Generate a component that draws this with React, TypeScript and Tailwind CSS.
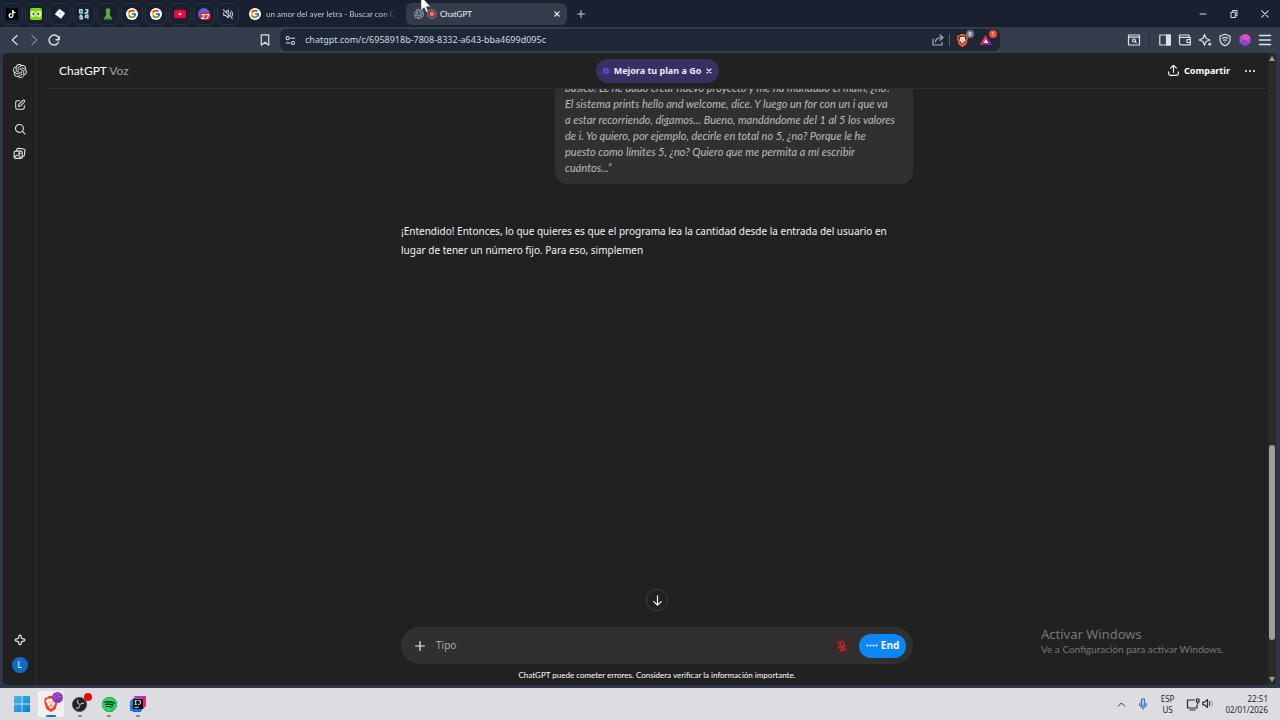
import type { ReactNode } from "react";
import { FcGoogle } from "react-icons/fc";
import { SiOpenai, SiBrave, SiSpotify, SiTiktok, SiYoutube } from "react-icons/si";

const GoogleBadge = () => (
  <span className="flex size-3 shrink-0 items-center justify-center rounded-full bg-white">
    <FcGoogle size={10} />
  </span>
);

const stroke = {
  fill: "none",
  stroke: "currentColor",
  strokeLinecap: "round" as const,
  strokeLinejoin: "round" as const,
};

function Icon({ size = 14, width = 1.2, children }: { size?: number; width?: number; children: ReactNode }) {
  return (
    <svg width={size} height={size} viewBox="0 0 14 14" strokeWidth={width} {...stroke} aria-hidden="true" className="shrink-0">
      {children}
    </svg>
  );
}

const pinned: { name: string; icon: ReactNode }[] = [
  {
    name: "TikTok",
    icon: (
      <span className="flex size-3 items-center justify-center rounded-xs bg-black text-white">
        <SiTiktok size={8} />
      </span>
    ),
  },
  {
    name: "Duolingo",
    icon: (
      <svg width="12" height="12" viewBox="0 0 12 12">
        <rect width="12" height="12" rx="2" fill="#7bdc0a" />
        <rect x=".8" y="3" width="4.8" height="6" rx="2.2" fill="#efffd8" />
        <rect x="6.4" y="3" width="4.8" height="6" rx="2.2" fill="#efffd8" />
        <rect x="2.6" y="4.4" width="1.7" height="2.8" rx=".8" fill="#365b12" />
        <rect x="7.4" y="4.4" width="1.7" height="2.8" rx=".8" fill="#365b12" />
      </svg>
    ),
  },
  {
    name: "Git",
    icon: (
      <svg width="12" height="12" viewBox="0 0 12 12">
        <path d="M5.4 2 10 5.200 6.800 9.600 2 6z" fill="#f5f7fa" stroke="#f5f7fa" strokeWidth="1.800" strokeLinejoin="round" />
        <path d="M5 4.600 7 6.400" stroke="#7b8492" strokeWidth=".7" />
      </svg>
    ),
  },
  {
    name: "Código",
    icon: (
      <svg width="12" height="12" viewBox="0 0 12 12" fill="none" stroke="#a5dde3" strokeWidth="1.4">
        <path d="M1.7 1.7h2.4v3.1H1.7zM7.2 1.7h2.5v1.6L7.5 5h2.8M1.7 7.2h2.6M4 7.2 2 8.9h2.3v1.8H1.6M7.4 7.2h2.5v3.6M7.4 7.2v2h2.5" />
      </svg>
    ),
  },
  {
    name: "Ajedrez",
    icon: (
      <svg width="12" height="12" viewBox="0 0 12 12">
        <path d="M6 .3a2.200 2.200 0 0 1 1.500 3.900l1 .8-.9.700q.2 2.300 2 3.700.6.700.6 2.100H1.800q0-1.400.6-2.100 1.800-1.400 2-3.700L3.500 5l1-.8A2.200 2.200 0 0 1 6 .3z" fill="#68a746" />
        <path d="M2 10.300h8v1.200H2z" fill="#3d6f35" />
      </svg>
    ),
  },
  { name: "Google", icon: <GoogleBadge /> },
  { name: "Google 2", icon: <GoogleBadge /> },
  { name: "YouTube", icon: <SiYoutube size={12} className="bg-[radial-gradient(white_22%,transparent_23%)] text-[#f20440]" /> },
  {
    name: "Discord",
    icon: (
      <svg width="13" height="12" viewBox="0 0 13 12">
        <circle cx="6" cy="6" r="6" fill="#5662dc" />
        <rect x="2" y="4" width="10.5" height="8" rx="3.5" fill="#df2638" />
        <text x="7.2" y="10.7" fontSize="7.5" fontWeight="700" fontFamily="Open Sans, sans-serif" fill="white" textAnchor="middle">27</text>
      </svg>
    ),
  },
  {
    name: "Silenciado",
    icon: (
      <Icon size={12} width={1.2}>
        <path d="M2 5.2v3.4h2l3.4 2.8V7.6M5.2 4.1l2.2-1.8v3.3M1.5 2 12 12.2M9.4 5.2q1.2 1.4.4 3M10.8 3.5q2.6 3 .8 6.2" />
      </Icon>
    ),
  },
];

function IconButton({ label, className = "", children }: { label: string; className?: string; children: ReactNode }) {
  return (
    <button type="button" aria-label={label} className={`flex shrink-0 items-center justify-center ${className}`}>
      {children}
    </button>
  );
}

function TabStrip() {
  return (
    <div className="relative flex h-[27px] shrink-0 items-center bg-[#192131] pl-px font-[Lato,sans-serif] text-[#c6ced9]">
      <nav aria-label="Pestañas fijadas" className="flex gap-0.5">
        {pinned.map((tab) => (
          <IconButton key={tab.name} label={tab.name} className="size-[22px] rounded-md border border-[#293241]">
            {tab.icon}
          </IconButton>
        ))}
      </nav>
      <button type="button" className="ml-2.5 flex w-[149px] items-center gap-[5px] text-[8px] text-[#c3cad5]">
        <GoogleBadge />
        <span className="text-left whitespace-nowrap [mask-image:linear-gradient(to_right,black_90%,transparent)]">
          un amor del ayer letra - Buscar con G
        </span>
      </button>
      <div className="ml-2 flex h-[22px] w-[161px] items-center rounded-md bg-[#343c4b] pr-1 pl-2 text-[8px] text-[#f1f4f8]">
        <SiOpenai size={10} className="text-[#aeb5bf]" />
        <svg width="10" height="10" viewBox="0 0 10 10" className="ml-[3px]" aria-hidden="true">
          <circle cx="5" cy="5" r="4.2" fill="none" stroke="#e36a6b" strokeWidth="1" />
          <circle cx="5" cy="5" r="2.4" fill="#ed7373" />
        </svg>
        <span className="ml-[3px] flex-1">ChatGPT</span>
        <IconButton label="Cerrar pestaña" className="size-3">
          <Icon size={10} width={1.8}><path d="m4 4 6 6M10 4l-6 6" /></Icon>
        </IconButton>
      </div>
      <IconButton label="Nueva pestaña" className="ml-[7px] size-3.5">
        <Icon size={12}><path d="M7 3v8M3 7h8" /></Icon>
      </IconButton>
      <div className="ml-auto flex text-[#d5dae2]">
        <IconButton label="Minimizar" className="w-[31px]"><Icon size={12}><path d="M3.5 7h7" /></Icon></IconButton>
        <IconButton label="Restaurar" className="w-[31px]">
          <Icon size={12}><path d="M3.5 5h5v6h-5zM5.5 5V3h5v6h-2" /></Icon>
        </IconButton>
        <IconButton label="Cerrar" className="w-[31px]"><Icon size={12}><path d="m3.3 3.3 7.4 7.4M10.7 3.3l-7.4 7.4" /></Icon></IconButton>
      </div>
      <svg width="12" height="18" viewBox="0 0 12 18" className="absolute -top-1 left-[420px]" aria-hidden="true">
        <path d="M1 0v14.5l3.2-3 2.1 4.7 2-.9-2.1-4.5h4.2z" fill="white" stroke="#303642" strokeWidth=".5" />
      </svg>
    </div>
  );
}

function Toolbar() {
  return (
    <div className="flex h-[26px] shrink-0 items-center gap-2 bg-[#343d4c] px-2 text-[#dbe1e8]">
      <div className="flex flex-1 items-center">
        <IconButton label="Atrás" className="w-3.5"><Icon><path d="M9 2.5 4.2 7 9 11.5" /></Icon></IconButton>
        <IconButton label="Adelante" className="ml-[5px] w-3.5 text-[#7b8492]"><Icon><path d="M5 2.5 9.8 7 5 11.5" /></Icon></IconButton>
        <IconButton label="Recargar" className="ml-1.5 w-3.5">
          <Icon width={1.4}><path d="M11.5 9.3A5 5 0 1 1 12 6.5M12.2 3.5v3.2H9" /></Icon>
        </IconButton>
        <IconButton label="Añadir marcador" className="ml-auto w-3.5">
          <Icon><path d="M3.3 1.8h7.4v10.4L7 9.2l-3.7 3z" /></Icon>
        </IconButton>
      </div>
      <div className="flex h-[22px] w-[720px] shrink items-center rounded-md bg-[#1e2736] px-1">
        <Icon size={13} width={1.1}><circle cx="4" cy="4.5" r="1.7" /><path d="M7 4.5h4.5M2.5 9.7h4" /><circle cx="9.7" cy="9.7" r="1.7" /></Icon>
        <input aria-label="Dirección" readOnly defaultValue="chatgpt.com/c/6958918b-7808-8332-a643-bba4699d095c" className="ml-2 min-w-0 flex-1 bg-transparent text-[9px] text-[#d0d7e0] outline-none" />
        <IconButton label="Compartir página" className="w-3.5 text-[#a5afbd]">
          <Icon><path d="M2 6v6h9V9.5M4.5 9C4.5 6 6.5 4.5 11.5 4.5M9 2l3 2.5-3 2.7" /></Icon>
        </IconButton>
        <span className="mx-1 h-3 w-px bg-[#566170]" />
        <span className="relative ml-0.5 flex size-4 items-center">
          <SiBrave size={13} className="text-[#f65a2c]" />
          <svg width="13" height="13" viewBox="0 0 13 13" className="absolute left-0" aria-hidden="true"><path d="M3.500 3.500 6.500 2.800l3 .7-.6 1.200.6 1.200L8.700 7 6.500 9.500 4.300 7l-.8-1.100.6-1.200z" fill="#f5ebe8" /><path d="m4.800 4.800 1.200.6M8.200 4.800 7 5.400M6.500 6v1.500" stroke="#f65a2c" strokeWidth=".7" /></svg>
          <span className="absolute -top-0.5 -right-0.5 flex size-2 items-center justify-center rounded-full bg-[#6d7485] text-[6px] text-white">8</span>
        </span>
        <span className="relative ml-2 flex size-4 items-center">
          <svg width="12" height="12" viewBox="0 0 12 12" aria-hidden="true"><path d="M6 1 0 11h6z" fill="#ff4734" /><path d="M6 1 12 11H0l3-2z" fill="#8e219d" /><path d="m6 1-6 10 3-2 3-4z" fill="#f24338" /><path d="m6 5 2.2 4H3.8z" fill="white" /></svg>
          <span className="absolute -top-0.5 -right-px flex size-2 items-center justify-center rounded-full bg-[#f3472f] text-[6px] text-white">1</span>
        </span>
      </div>
      <div className="flex flex-1 items-center justify-end gap-1.5">
        <IconButton label="Buscar pestañas" className="w-3.5">
          <Icon><path d="M1.5 2h11v10h-11zM1.5 4.2h11" /><circle cx="7" cy="7.5" r="1.5" /><path d="m8.2 8.7 1 1" /></Icon>
        </IconButton>
        <span className="mx-0.5 h-3 w-px bg-[#1d2634]" />
        <IconButton label="Barra lateral" className="w-3.5"><Icon><path d="M1.8 2h10.4v10H1.8z" /><path d="M8.5 2h3.7v10H8.5z" fill="currentColor" /></Icon></IconButton>
        <IconButton label="Cartera" className="w-3.5"><Icon><path d="M11 4.3V2H1.5v8.2q0 1.6 1.6 1.6h9.2V4.3H2.5M12.3 6.5H9v3h3.3" /></Icon></IconButton>
        <IconButton label="Leo" className="w-3.5"><Icon><path d="M6.5 1.5 8 5.3 11.8 7 8 8.5 6.5 12.3 5 8.5 1.2 7 5 5.3zM11.7 10v2.5M10.5 11.2H13" /></Icon></IconButton>
        <IconButton label="VPN" className="w-3.5"><Icon><path d="M7 1.2 12 3v4.5q-1 3.7-5 5.3-4-1.6-5-5.3V3zM4.3 5.2q2.7-1.5 5.4 0M5.4 7.2q1.6-.8 3.2 0M7 9.2v.1" /></Icon></IconButton>
        <IconButton label="Perfil" className="w-3.5">
          <svg width="12" height="12" viewBox="0 0 12 12" aria-hidden="true"><circle cx="6" cy="6" r="5.7" fill="#9143d0" /><path d="M.4 5Q2 .3 6.500.3q3.800.2 5 4Q6 2.500.4 5" fill="#f04fb5" /><path d="M.8 7.500q3.500-4 10.500-2.500M5 3.500l6 5" stroke="#ee62b9" fill="none" /></svg>
        </IconButton>
        <IconButton label="Menú" className="w-3.5"><Icon width={1.5}><path d="M1.5 2.5h11M1.5 7h11M1.5 11.5h11" /></Icon></IconButton>
      </div>
    </div>
  );
}

function Sidebar() {
  return (
    <aside className="flex w-[34px] shrink-0 flex-col items-center border-r border-[#2c2c2c] pt-2.5 pb-3 text-[#e8e8e8]">
      <IconButton label="ChatGPT" className="size-4"><SiOpenai size={14} /></IconButton>
      <IconButton label="Nuevo chat" className="mt-[18px] size-4">
        <Icon size={12}><path d="M6.5 2H4Q2 2 2 4v6q0 2 2 2h6q2 0 2-2V7.5M5.2 8.8l.5-2.6L10.5 1.4q1.3-.5 2 .8 0 .6-.3 1L7.8 8z" /></Icon>
      </IconButton>
      <IconButton label="Buscar" className="mt-2 size-4"><Icon size={12} width={1.3}><circle cx="6.3" cy="6.3" r="4.6" /><path d="m9.7 9.7 3 3" /></Icon></IconButton>
      <IconButton label="Imágenes" className="mt-2 size-4">
        <Icon size={13}><path d="M4 4V3q.2-1.7 2-1.5l5.5.6q1.5.2 1.3 1.8l-.6 5q-.3 1.5-1.7 1.3M2.8 4.5h5.5q1.6 0 1.6 1.6v4.6q0 1.6-1.6 1.6H2.8q-1.6 0-1.6-1.6V6.100q0-1.600 1.600-1.600M1.500 11l2.300-2q1-.7 2 0l3.200 3" /><circle cx="6.9" cy="7" r=".7" /></Icon>
      </IconButton>
      <IconButton label="Mejorar plan" className="mt-auto size-4">
        <Icon size={12} width={1.4}><path d="M7 1.3q1.4 0 1.4 1.8 0 2.5 2.5 2.5 1.8 0 1.8 1.4t-1.8 1.4q-2.5 0-2.5 2.5 0 1.8-1.4 1.8t-1.4-1.8q0-2.5-2.5-2.5Q1.3 8.4 1.3 7t1.8-1.4q2.5 0 2.5-2.5Q5.6 1.3 7 1.3z" /></Icon>
      </IconButton>
      <button type="button" className="mt-[9px] flex size-4 items-center justify-center rounded-full bg-[#0f6cc4] text-[8px] text-white">L</button>
    </aside>
  );
}

function Chat() {
  return (
    <main className="flex min-w-0 flex-1 flex-col pr-0.5 pl-[11px]">
      <header className="grid h-9 shrink-0 grid-cols-[1fr_auto_1fr] items-center border-b border-[#2e2e2e] pr-2.5 pl-[11px]">
        <h1 className="font-[Lato,sans-serif] text-[12px] text-white">ChatGPT <span className="text-[#a3a3a3]">Voz</span></h1>
        <button type="button" className="flex h-6 items-center rounded-full bg-[#383062] px-1.5 text-[9px] font-bold text-[#eeeaff]">
          <svg width="8" height="8" viewBox="0 0 8 8" aria-hidden="true"><path d="M2.500.8h3L7.200 2.500v3L5.500 7.200h-3L.8 5.500v-3z" fill="#5b46c9" /><circle cx="4" cy="4" r="1.300" fill="#4633a8" /></svg>
          <span className="mr-1 ml-1">Mejora tu plan a Go</span>
          <Icon size={8} width={2}><path d="m3.5 3.5 7 7M10.5 3.5l-7 7" /></Icon>
        </button>
        <div className="flex items-center gap-3.5 justify-self-end text-white">
          <button type="button" className="flex items-center gap-1 text-[9px] font-bold">
            <Icon size={13}><path d="M7 9V1.500M3.800 4.500 7 1.500l3.200 3M1.800 8.500v1.700q0 2 2 2h6.400q2 0 2-2V8.500" /></Icon>
            Compartir
          </button>
          <IconButton label="Más opciones" className="w-3">
            <svg width="12" height="4" viewBox="0 0 12 4" fill="currentColor" aria-hidden="true"><circle cx="2" cy="2" r="1" /><circle cx="6" cy="2" r="1" /><circle cx="10" cy="2" r="1" /></svg>
          </IconButton>
        </div>
      </header>

      <div className="mx-auto flex min-h-0 w-full max-w-[512px] flex-1 flex-col">
        <div className="flex h-[95px] shrink-0 flex-col items-end justify-end overflow-hidden">
          <p className="w-[358px] shrink-0 rounded-xl bg-[#303030] px-2.5 py-2 font-[Lato,sans-serif] text-[11px]/4 whitespace-nowrap text-[#bdbdbd] italic">
            básico. Le he dado crear nuevo proyecto y me ha mandado el main, ¿no?<br />
            El sistema prints hello and welcome, dice. Y luego un for con un i que va<br />
            a estar recorriendo, digamos... Bueno, mandándome del 1 al 5 los valores<br />
            de i. Yo quiero, por ejemplo, decirle en total no 5, ¿no? Porque le he<br />
            puesto como límites 5, ¿no? Quiero que me permita a mí escribir<br />
            cuántos...”
          </p>
        </div>
        <p className="mt-[38px] text-[10px]/[19px] whitespace-nowrap text-[#f3f3f3]">
          ¡Entendido! Entonces, lo que quieres es que el programa lea la cantidad desde la entrada del usuario en<br />
          lugar de tener un número fijo. Para eso, simplemen
        </p>
        <IconButton label="Ir al final" className="mx-auto mt-auto size-[22px] rounded-full border border-[#3d3d3d] text-white">
          <Icon size={13} width={1.3}><path d="M7 2v10M3 8.2 7 12l4-3.8" /></Icon>
        </IconButton>
        <form className="mt-4 flex h-[37px] shrink-0 items-center rounded-full bg-[#303030] pr-[7px] pl-3" onSubmit={(e) => e.preventDefault()}>
          <IconButton label="Añadir" className="size-3.5 text-[#f0f0f0]"><Icon><path d="M7 2.5v9M2.5 7h9" /></Icon></IconButton>
          <input aria-label="Mensaje" placeholder="Tipo" className="ml-[9px] min-w-0 flex-1 bg-transparent text-[10px] outline-none placeholder:text-[#a8a8a8]" />
          <IconButton label="Activar micrófono" className="mr-2.5 size-3.5 rounded-full bg-[#42282a] text-[#cf2a32] shadow-[0_0_5px_2px_#42282a]">
            <Icon size={12}><path d="M5 5.5V3.5q0-2 2-2t2 2v4M5.3 7.5Q6 9 7.5 8.8M3 6.5q.3 4 4 4.3 1.500 0 2.500-1M7 11v1.500M5 12.500h4M11 6.500v1M2 2l10 10" /></Icon>
          </IconButton>
          <button type="button" className="flex h-6 w-[47px] items-center justify-center gap-[3px] rounded-full bg-[#0d87f5] text-[10px] font-bold text-white">
            <svg width="12" height="3" viewBox="0 0 12 3" fill="currentColor" aria-hidden="true"><circle cx="1.5" cy="1.5" r="1" /><circle cx="4.5" cy="1.5" r="1" /><circle cx="7.5" cy="1.5" r="1" /><circle cx="10.5" cy="1.5" r="1" /></svg>
            End
          </button>
        </form>
        <p className="mt-[3px] mb-0.5 text-center font-[Lato,sans-serif] text-[8px]/4 text-white">ChatGPT puede cometer errores. Considera verificar la información importante.</p>
      </div>
    </main>
  );
}

function Scrollbar() {
  return (
    <div aria-hidden="true" className="flex w-2 shrink-0 flex-col items-center justify-between bg-[#2a2a2a] py-[3px]">
      <svg width="6" height="5" viewBox="0 0 6 5" fill="#a0a0a0"><path d="m3 0 3 5H0z" /></svg>
      <div className="flex w-1.5 flex-1 flex-col py-1">
        <div className="grow-[39]" />
        <div className="grow-[20] rounded-full bg-[#9d9d9d]" />
        <div className="h-[33px] shrink-0" />
      </div>
      <svg width="6" height="5" viewBox="0 0 6 5" fill="#a0a0a0"><path d="m3 5 3-5H0z" /></svg>
    </div>
  );
}

function Taskbar() {
  const apps: { name: string; active?: boolean; running: boolean; icon: ReactNode }[] = [
    {
      name: "Inicio",
      running: false,
      icon: (
        <svg width="16" height="16" viewBox="0 0 16 16">
          <defs><linearGradient id="win" x2="1" y2="1"><stop stopColor="#42bee8" /><stop offset="1" stopColor="#087bd0" /></linearGradient></defs>
          <path d="M0 0h7.6v7.6H0zM8.4 0H16v7.6H8.4zM0 8.4h7.6V16H0zM8.4 8.4H16V16H8.4z" fill="url(#win)" />
        </svg>
      ),
    },
    {
      name: "Brave",
      active: true,
      running: true,
      icon: (
        <span className="relative flex size-4 items-center">
          <SiBrave size={16} className="text-[#ef4526]" />
          <svg width="16" height="16" viewBox="0 0 16 16" className="absolute inset-0"><path d="m4 4.300 4-1 4 1-.8 1.700.8 1.500-2 2.500L8 12l-2-2-2-2.500L4.800 6z" fill="#fff5f1" /><path d="m5.500 5.800 1.800.9M10.500 5.800l-1.800.9M8 7.500v2M6.800 10 8 9.300l1.200.7" stroke="#ef4526" strokeWidth=".9" fill="none" /></svg>
          <svg width="11" height="11" viewBox="0 0 12 12" className="absolute -top-1 -right-1"><circle cx="6" cy="6" r="6" fill="#833bb7" /><path d="M1 6q4-5 9-4M2 8q4-4 9-3" stroke="#d15dcc" fill="none" /></svg>
        </span>
      ),
    },
    {
      name: "OBS Studio",
      running: true,
      icon: (
        <span className="relative flex size-4 items-center">
          <svg width="15" height="15" viewBox="0 0 16 16">
            <circle cx="8" cy="8" r="7.5" fill="#232327" stroke="#45454a" />
            <path d="M6.2 3.200Q5 5.800 7.600 7.600M12.500 6.800Q10 6 8.600 8.300M4.400 11.800q3.400.6 3.800-2.600" fill="none" stroke="#b4b4b9" strokeWidth="1.200" strokeLinecap="round" />
          </svg>
          <span className="absolute -top-[3px] -right-1 size-2 rounded-full bg-[#df0712]" />
        </span>
      ),
    },
    { name: "Spotify", running: true, icon: <SiSpotify size={15} className="rounded-full bg-[#172319] text-[#26d760]" /> },
    {
      name: "IntelliJ IDEA",
      running: true,
      icon: (
        <svg width="16" height="16" viewBox="0 0 16 16">
          <path d="M0 5 5 1h6L9 15H0z" fill="#2385ed" /><path d="M4 0h12v10l-4 4z" fill="#e3287f" /><path d="M0 9h13l-2 7H3z" fill="#146fe0" /><path d="M6 0h7L9 5z" fill="#8e4bd0" />
          <rect x="3" y="3" width="10" height="10" fill="#08080b" /><path d="M4.500 4.700h2.400M5.700 4.700v3.600M4.500 8.300h2.400M8 4.700h2.400v2.600q0 1-1.200 1H8M4.500 11.300h4" fill="none" stroke="white" strokeWidth=".9" />
        </svg>
      ),
    },
  ];
  return (
    <footer className="flex h-8 shrink-0 items-center justify-between bg-[#dddde1] pr-3 pl-[9px] text-[#27272a]">
      <nav aria-label="Barra de tareas" className="flex h-full items-center gap-[3px]">
        {apps.map((app) => (
          <button key={app.name} type="button" aria-label={app.name} className={`relative flex h-[26px] w-[26px] items-center justify-center rounded-xs ${app.active ? "bg-[#f1eff1]" : ""}`}>
            {app.icon}
            {app.running && <span className={`absolute bottom-0 h-0.5 rounded-full ${app.active ? "w-2.5 bg-[#0b78cd]" : "w-1 bg-[#858589]"}`} />}
          </button>
        ))}
      </nav>
      <div className="flex items-center text-[8px]/[11px]">
        <IconButton label="Iconos ocultos" className="w-3"><Icon size={11}><path d="m3 9 4-4 4 4" /></Icon></IconButton>
        <IconButton label="Micrófono" className="ml-[9px] w-3 text-[#2866ac]"><Icon size={12}><path d="M5 3q0-2 2-2t2 2v4q0 2-2 2T5 7z" fill="#a9c8ee" /><path d="M3 6.500Q3 11 7 11t4-4.500M7 11v2" /></Icon></IconButton>
        <button type="button" className="ml-3 text-center">ESP<br />US</button>
        <button type="button" aria-label="Red y volumen" className="ml-3 flex gap-px">
          <Icon><path d="M8.500 3H1.500v8H11V8M4 13h5M10.500 2h2.500v3h-2.500zM11.800 5v2" /></Icon>
          <Icon size={13}><path d="M2 5.500v3h2l3 2.800V2.700l-3 2.800zM9 5q1.300 2 0 4" /><path d="M11 3.500q2.500 3.500 0 7" stroke="#a5a5aa" /></Icon>
        </button>
        <time className="ml-[11px] text-right">22:51<br />02/01/2026</time>
      </div>
    </footer>
  );
}

export default function App() {
  return (
    <div className="relative flex h-screen flex-col overflow-hidden bg-[#192131] font-['Noto_Sans',sans-serif]">
      <TabStrip />
      <Toolbar />
      <div className="flex min-h-0 flex-1 bg-[#2d3747] pr-1 pb-[3px] pl-[3px]">
        <div className="flex min-w-0 flex-1 overflow-hidden rounded-sm bg-[#212121]">
          <Sidebar />
          <Chat />
          <Scrollbar />
        </div>
      </div>
      <Taskbar />
      <div className="pointer-events-none absolute right-[55px] bottom-16 w-[184px] whitespace-nowrap text-[#777777]">
        <p className="text-[13px]/4">Activar Windows</p>
        <p className="font-[Lato,sans-serif] text-[10px]/[14px]">Ve a Configuración para activar Windows.</p>
      </div>
    </div>
  );
}
